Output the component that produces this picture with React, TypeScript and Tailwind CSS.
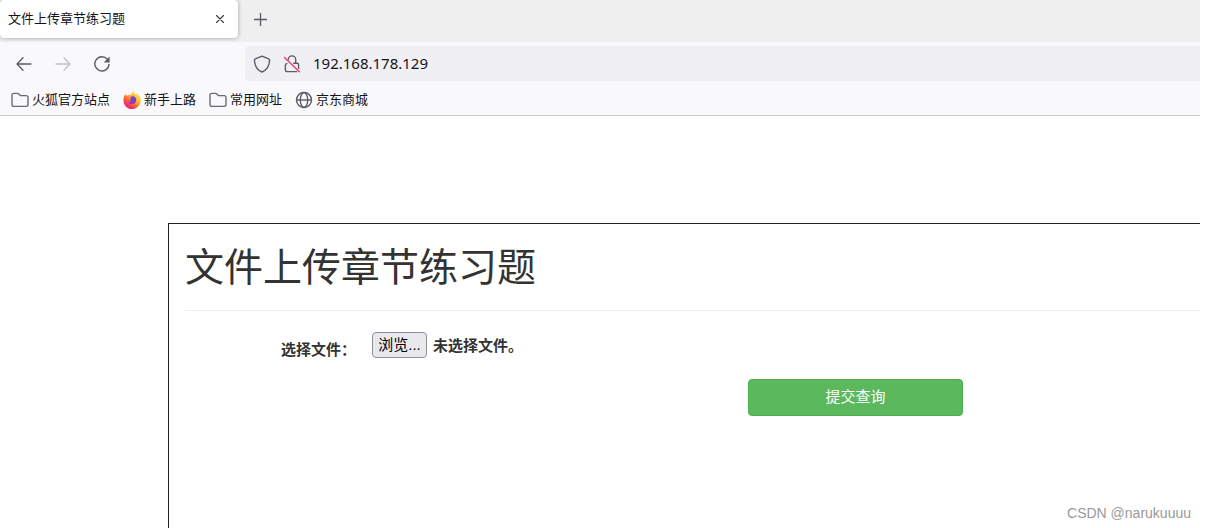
import { useRef, useState } from "react";
import type { ReactNode } from "react";

const BackIcon = () => (
  <svg viewBox="0 0 16 16" className="h-4 w-4" fill="none" stroke="currentColor" strokeWidth="1.3" strokeLinecap="round" strokeLinejoin="round">
    <path d="M15 8H1M7 1.8 1 8l6 6.2" />
  </svg>
);

const ForwardIcon = () => (
  <svg viewBox="0 0 16 16" className="h-4 w-4" fill="none" stroke="currentColor" strokeWidth="1.3" strokeLinecap="round" strokeLinejoin="round">
    <path d="M1 8h14M9 1.8 15 8l-6 6.2" />
  </svg>
);

const ReloadIcon = () => (
  <svg viewBox="0 0 16 16" className="h-4 w-4" fill="none" stroke="currentColor" strokeWidth="1.4" strokeLinecap="round">
    <path d="M13.4 3.4A7.1 7.1 0 1 0 15 8.4" />
    <path d="M15.6.6v5.9H9.7z" fill="currentColor" stroke="none" />
  </svg>
);

const ShieldIcon = () => (
  <svg viewBox="0 0 18 18" className="h-[18px] w-[18px]" fill="none" stroke="currentColor" strokeWidth="1.4" strokeLinejoin="round">
    <path d="M9 1.2 15.7 3.8c.6.2.9.7.9 1.2-.2 5.6-2.6 10-7.6 12C4 15 1.6 10.6 1.4 5c0-.5.3-1 .9-1.2z" />
  </svg>
);

const InsecureIcon = () => (
  <svg viewBox="0 0 18 18" className="h-[18px] w-[18px]" fill="none" strokeLinecap="round">
    <path
      d="M5.3 4.6a3.7 3.7 0 0 1 7.4 0V8M4 8.6c-1 0-1.6.6-1.6 1.5v5c0 1 .6 1.5 1.6 1.5h9.6M10.8 8.3h3.2c1 0 1.6.6 1.6 1.5v3.6"
      stroke="currentColor"
      strokeWidth="1.4"
    />
    <path d="M1.5 2.5 16.3 16.8" stroke="#f0406a" strokeWidth="1.5" />
  </svg>
);

const FolderIcon = () => (
  <svg viewBox="0 0 18 16" className="h-4 w-[18px] text-[#6c6b73]" fill="none" stroke="currentColor" strokeWidth="1.4" strokeLinejoin="round">
    <path d="M1 3.2C1 2 1.8 1.4 2.8 1.4h3.6c.6 0 1 .2 1.4.6l1.6 1.6h5.8c1.2 0 1.8.7 1.8 1.8v7.2c0 1.2-.7 1.8-1.8 1.8H2.8C1.7 14.4 1 13.7 1 12.6z" />
  </svg>
);

const GlobeIcon = () => (
  <svg viewBox="0 0 18 18" className="h-[18px] w-[18px] text-[#5b5b66]" fill="none" stroke="currentColor" strokeWidth="1.4">
    <circle cx="9" cy="9" r="7.5" />
    <ellipse cx="9" cy="9" rx="3.7" ry="7.5" />
    <path d="M1.5 9h15" />
  </svg>
);

const FirefoxIcon = () => (
  <svg viewBox="0 0 18 18" className="h-[18px] w-[18px]">
    <defs>
      <linearGradient id="flame" x1="0.9" y1="0.1" x2="0.25" y2="0.95">
        <stop offset="0" stopColor="#fff04a" />
        <stop offset="0.4" stopColor="#ffb02e" />
        <stop offset="0.7" stopColor="#ff5a36" />
        <stop offset="1" stopColor="#f0158a" />
      </linearGradient>
    </defs>
    <path
      d="M2.6 3c.2 1 .8 1.6 1.8 1.6 1-.7 2.4-1 3.8-.8C8.4 2.3 9.5 1 10.8.2c.1 1.700 1.300 2.700 2.500 3.600.3-.4.3-.9.2-1.500 2.600 1.700 4.200 4.200 4.200 7.200a8.500 8.500 0 0 1-17.200.2C.4 7.200 1 4.800 2.600 3z"
      fill="url(#flame)"
    />
    <path
      d="M9 5.4c2.600-.3 4.200 1.400 4.200 3.700 0 2.400-1.800 4-4.200 4-2.200 0-3.700-1.400-3.900-3.200 1.100 1.300 2.800 1.300 3.800.2-1.500 0-2.200-.7-2.400-1.500.9-.2 1.500-.5 1.900-1.100L6.800 6.300z"
      fill="#7b3fd0"
    />
  </svg>
);

type Bookmark = { label: string; icon: ReactNode };

const bookmarks: Bookmark[] = [
  { label: "火狐官方站点", icon: <FolderIcon /> },
  { label: "新手上路", icon: <FirefoxIcon /> },
  { label: "常用网址", icon: <FolderIcon /> },
  { label: "京东商城", icon: <GlobeIcon /> },
];

const TabStrip = () => (
  <div className="flex h-[42px] items-start bg-[#efefef]">
    <div className="flex h-[38px] w-[238px] items-center justify-between rounded bg-white pr-3 pl-2 shadow-[0_0_4px_rgba(0,0,0,0.35)]">
      <span className="text-[13px] text-[#15141a]">文件上传章节练习题</span>
      <button type="button" aria-label="关闭标签页" className="p-0.5 text-[#3b3b43]">
        <svg viewBox="0 0 8 8" className="h-2 w-2" fill="none" stroke="currentColor" strokeWidth="1.1" strokeLinecap="round">
          <path d="M.5.5l7 7M7.5.5l-7 7" />
        </svg>
      </button>
    </div>
    <button type="button" aria-label="新建标签页" className="ml-4 flex h-[38px] items-center text-[#5b5b66]">
      <svg viewBox="0 0 13 13" className="h-[13px] w-[13px]" fill="none" stroke="currentColor" strokeWidth="1.3">
        <path d="M6.5 0v13M0 6.5h13" />
      </svg>
    </button>
  </div>
);

const Toolbar = () => {
  const [url, setUrl] = useState("192.168.178.129");

  return (
    <div className="flex items-center pt-1 pl-4 text-[#5b5b66]">
      <div className="flex w-[229px] items-center gap-[23px]">
        <button type="button" aria-label="后退">
          <BackIcon />
        </button>
        <button type="button" aria-label="前进" disabled className="text-[#c0c0c6]">
          <ForwardIcon />
        </button>
        <button type="button" aria-label="重新载入">
          <ReloadIcon />
        </button>
      </div>
      <div className="flex h-[35px] flex-1 items-center gap-3 rounded-l bg-[#f0eff4] pl-2">
        <ShieldIcon />
        <InsecureIcon />
        <input
          type="text"
          aria-label="地址"
          value={url}
          onChange={(e) => setUrl(e.target.value)}
          className="min-w-0 flex-1 bg-transparent font-['Noto_Sans',sans-serif] text-[15px] text-[#15141a] outline-none"
        />
      </div>
    </div>
  );
};

const BookmarksBar = () => (
  <nav className="flex h-[35px] items-center gap-[13px] border-b border-[#cccccf] pt-1 pl-[11px]">
    {bookmarks.map((b) => (
      <a key={b.label} href="#" className="flex items-center gap-[3px] text-[13px] text-[#15141a]">
        {b.icon}
        <span>{b.label}</span>
      </a>
    ))}
  </nav>
);

const UploadForm = () => {
  const fileRef = useRef<HTMLInputElement>(null);
  const [fileName, setFileName] = useState("");

  return (
    <form onSubmit={(e) => e.preventDefault()} className="pt-[21px] text-[15px]">
      <div className="flex items-start pl-24 font-bold">
        <label htmlFor="upload" className="w-[91px] pt-2 leading-5">
          选择文件：
        </label>
        <input
          ref={fileRef}
          id="upload"
          type="file"
          className="hidden"
          onChange={(e) => setFileName(e.target.files?.[0]?.name ?? "")}
        />
        <button
          type="button"
          onClick={() => fileRef.current?.click()}
          className="h-[26px] w-[55px] rounded border border-[#8f8f9d] bg-[#e9e9ed] text-center font-normal whitespace-nowrap text-black"
        >
          浏览...
        </button>
        <span className="pl-1.5 leading-7">{fileName || "未选择文件。"}</span>
      </div>
      <button
        type="submit"
        className="mt-[19px] ml-[563px] h-[37px] w-[215px] rounded border border-[#4cae4c] bg-[#5cb85c] text-white"
      >
        提交查询
      </button>
    </form>
  );
};

const App = () => {
  return (
    <div className="flex min-h-screen flex-col overflow-hidden bg-white pr-1.5 font-['Liberation_Sans','Noto_Sans_CJK_SC',sans-serif]">
      <header className="bg-[#f9f9fb]">
        <TabStrip />
        <Toolbar />
        <BookmarksBar />
      </header>
      <main className="mt-[107px] ml-[168px] flex flex-1 flex-col border-t border-l border-[#222222] pl-4 text-[#333333]">
        <h1 className="border-b border-[#eeeeee] pt-[22px] pb-5 text-[39px] leading-[44px]">文件上传章节练习题</h1>
        <UploadForm />
        <footer className="mt-auto pr-[9px] pb-1 text-right text-[14px] text-[#999999]">CSDN @narukuuuu</footer>
      </main>
    </div>
  );
};

export default App;
